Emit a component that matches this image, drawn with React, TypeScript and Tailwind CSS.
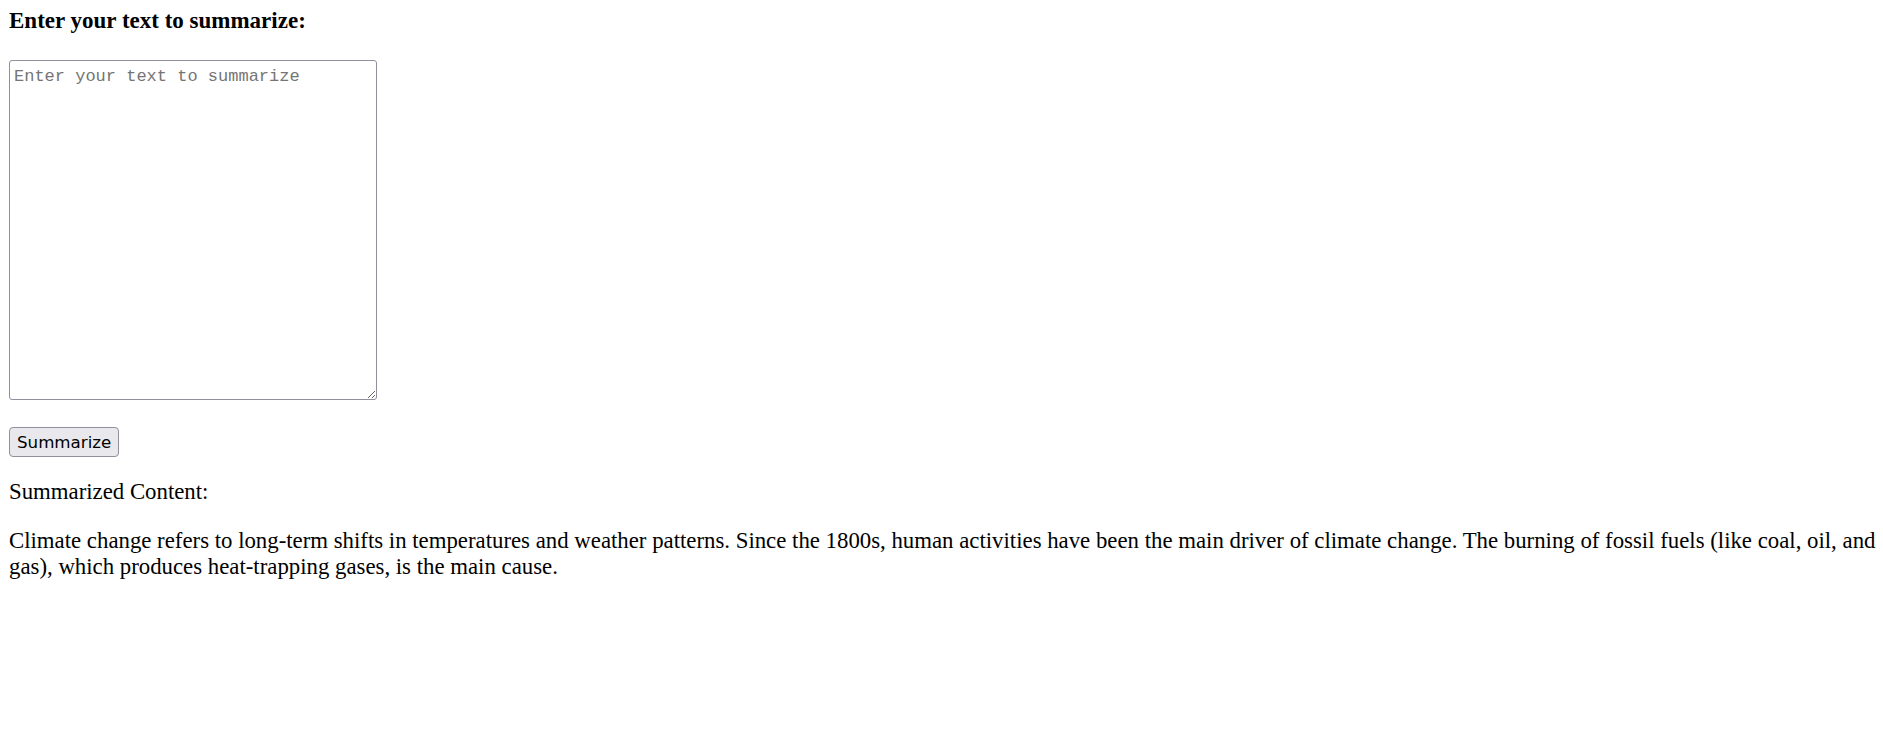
import { useState } from "react";

export default function App() {
  const [text, setText] = useState("");

  const summary =
    "Climate change refers to long-term shifts in temperatures and weather patterns. Since the 1800s, human activities have been the main driver of climate change. The burning of fossil fuels (like coal, oil, and gas), which produces heat-trapping gases, is the main cause.";

  return (
    <div className="min-h-screen bg-white pl-[9px] pr-[4px] text-black font-['Liberation_Serif',serif]">
      <h3 className="pt-[8px] text-[23px] font-bold leading-[26.5px]">
        Enter your text to summarize:
      </h3>
      <textarea
        value={text}
        onChange={(e) => setText(e.target.value)}
        placeholder="Enter your text to summarize"
        className="mt-[25.5px] block h-[340px] w-[368px] rounded-[3px] border border-[#8f8f9d] px-[4px] py-[6px] font-['Liberation_Mono',monospace] text-[17px] leading-[20px] placeholder:text-[#757575] outline-none"
      />
      <button className="mt-[27px] flex h-[30px] items-center rounded-[4px] border border-[#8f8f9d] bg-[#e9e9ed] px-[7px] font-['DejaVu_Sans',sans-serif] text-[16.67px] text-black">
        Summarize
      </button>
      <p className="mt-[22px] text-[22.8px] leading-[26.5px]">Summarized Content:</p>
      <p className="mt-[22px] text-[22.8px] leading-[26.5px]">{summary}</p>
    </div>
  );
}
